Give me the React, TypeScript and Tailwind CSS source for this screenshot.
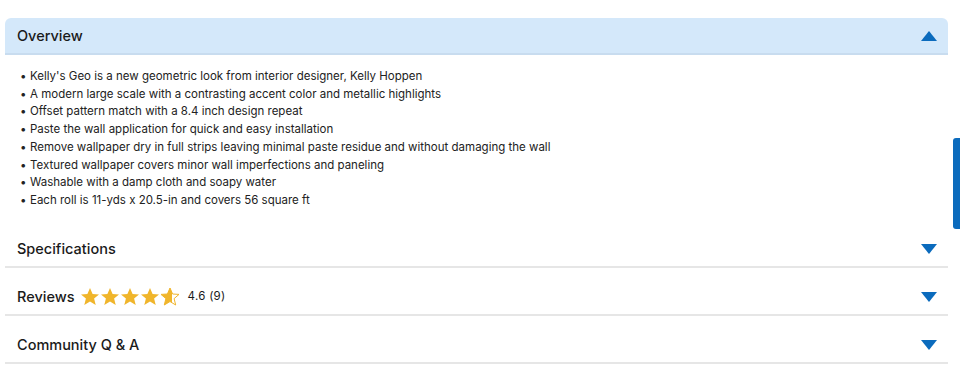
const BULLETS = [
  "Kelly's Geo is a new geometric look from interior designer, Kelly Hoppen",
  "A modern large scale with a contrasting accent color and metallic highlights",
  "Offset pattern match with a 8.4 inch design repeat",
  "Paste the wall application for quick and easy installation",
  "Remove wallpaper dry in full strips leaving minimal paste residue and without damaging the wall",
  "Textured wallpaper covers minor wall imperfections and paneling",
  "Washable with a damp cloth and soapy water",
  "Each roll is 11-yds x 20.5-in and covers 56 square ft",
];

function Caret({ up }: { up?: boolean }) {
  return (
    <svg width="16" height="10" viewBox="0 0 16 10" className="shrink-0">
      {up ? <path d="M8 0 L16 10 L0 10 Z" fill="#0b6bbd" /> : <path d="M0 0 L16 0 L8 10 Z" fill="#0b6bbd" />}
    </svg>
  );
}

function Star({ half }: { half?: boolean }) {
  const d =
    "M10 1 L12.6 7 L19 7.4 L14.1 11.6 L15.7 18 L10 14.5 L4.3 18 L5.9 11.6 L1 7.4 L7.4 7 Z";
  return (
    <svg width="20" height="20" viewBox="0 0 20 20">
      <defs>
        <clipPath id="halfclip">
          <rect x="0" y="0" width="12" height="20" />
        </clipPath>
      </defs>
      {half ? (
        <>
          <path d={d} fill="none" stroke="#f0b52b" strokeWidth="1" />
          <path d={d} fill="#f0b52b" clipPath="url(#halfclip)" />
        </>
      ) : (
        <path d={d} fill="#f0b52b" />
      )}
    </svg>
  );
}

function Row({ children }: { children: React.ReactNode }) {
  return (
    <div className="flex h-[48px] items-center justify-between border-b-2 border-[#e6e6e6] pl-3 pr-[11px] pt-[12px]">
      {children}
      <Caret />
    </div>
  );
}

export default function App() {
  return (
    <div
      className="relative h-[383px] w-[960px] overflow-hidden bg-white text-[#1a1a1a]"
      style={{ fontFamily: "Inter, 'Noto Sans', sans-serif" }}
    >
      <div className="ml-[5px] mt-[18px] w-[943px]">
        {/* overview, open */}
        <div className="flex h-[37px] items-center justify-between rounded-t-md border-b-2 border-[#c8dcef] bg-[#d4e8fa] pl-3 pr-[11px]">
          <p className="text-[14.5px] font-medium">Overview</p>
          <Caret up />
        </div>
        <ul className="pb-[10px] pl-[15px] pt-[13px] text-[11.5px] leading-[17.7px] text-[#222]">
          {BULLETS.map((b, i) => (
            <li key={i} className="flex">
              <span className="w-[10px] shrink-0">•</span>
              <span>{b}</span>
            </li>
          ))}
        </ul>

        <Row>
          <p className="text-[14.5px] font-medium">Specifications</p>
        </Row>
        <Row>
          <div className="flex items-center">
            <p className="text-[14.5px] font-medium">Reviews</p>
            <div className="ml-[5px] flex">
              <Star />
              <Star />
              <Star />
              <Star />
              <Star half />
            </div>
            <p className="ml-[8px] text-[11.5px] tracking-wide">4.6 (9)</p>
          </div>
        </Row>
        <Row>
          <p className="text-[14.5px] font-medium">Community Q &amp; A</p>
        </Row>
      </div>

      {/* side tab */}
      <div className="absolute right-0 top-[138px] h-[91px] w-[7px] rounded-l-[3px] bg-[#0b6bbd]" />
    </div>
  );
}
